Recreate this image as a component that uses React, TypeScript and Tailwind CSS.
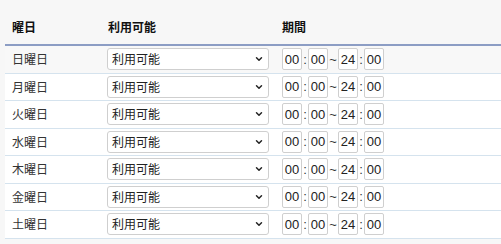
import { ChevronDown } from "lucide-react";

const days = ["日曜日", "月曜日", "火曜日", "水曜日", "木曜日", "金曜日", "土曜日"];

function TimeBox({ value }: { value: string }) {
  return (
    <span className="flex h-[22px] w-[20px] items-center justify-center rounded-[2px] border border-[#cfcfcf] bg-white text-[13px] text-[#222] font-['Liberation_Sans',sans-serif]">
      {value}
    </span>
  );
}

function Row({ day, shaded }: { day: string; shaded?: boolean }) {
  return (
    <div
      className={`flex h-[27.5px] items-center border-b border-[#d5e3ee] ${shaded ? "bg-[#f8f8f8]" : "bg-white"}`}
    >
      <div className="w-[102px] pl-[7px] text-[12px] text-[#333]">{day}</div>
      <div className="w-[175px]">
        <div className="flex h-[22px] w-[162px] items-center justify-between rounded-[3px] border border-[#cfcfcf] bg-white pl-[4px] pr-[4px] text-[12px] text-[#222]">
          <span>利用可能</span>
          <ChevronDown size={10} strokeWidth={3.5} className="text-[#222]" />
        </div>
      </div>
      <div className="flex items-center text-[13px] text-[#333] font-['Liberation_Sans',sans-serif]">
        <TimeBox value="00" />
        <span className="w-[6px] text-center">:</span>
        <TimeBox value="00" />
        <span className="w-[10px] text-center">~</span>
        <TimeBox value="24" />
        <span className="w-[6px] text-center">:</span>
        <TimeBox value="00" />
      </div>
    </div>
  );
}

export default function App() {
  return (
    <div className="h-[244px] w-[501px] overflow-hidden bg-[#f7f7f7] pl-[5px] font-['Noto_Sans_CJK_JP',sans-serif]">
      <div className="flex h-[46px] items-end border-b-2 border-[#8c9dc4] pb-[8px] text-[12px] font-bold text-[#111]">
        <div className="w-[103px] pl-[7px]">曜日</div>
        <div className="w-[174px]">利用可能</div>
        <div>期間</div>
      </div>
      {days.map((d, i) => (
        <Row key={d} day={d} shaded={i === 0} />
      ))}
    </div>
  );
}
